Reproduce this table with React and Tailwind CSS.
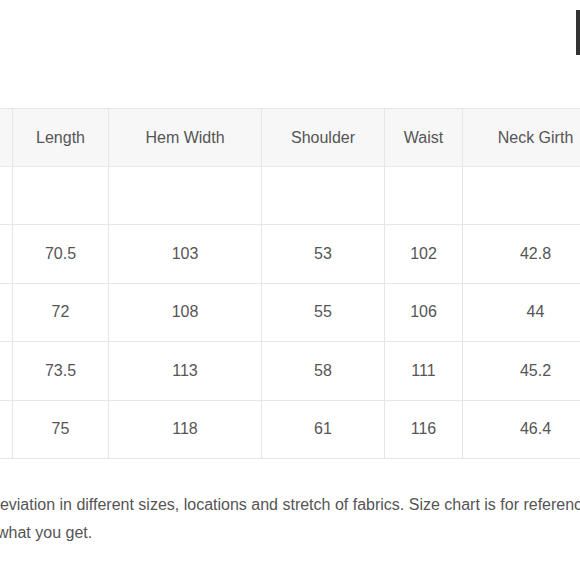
const HEADERS = ["", "Length", "Hem Width", "Shoulder", "Waist", "Neck Girth"];

const ROWS = [
  ["", "", "", "", "", ""],
  ["", "70.5", "103", "53", "102", "42.8"],
  ["", "72", "108", "55", "106", "44"],
  ["", "73.5", "113", "58", "111", "45.2"],
  ["", "75", "118", "61", "116", "46.4"],
];

const WIDTHS = ["w-[81px]", "w-[96px]", "w-[153px]", "w-[123px]", "w-[78px]", "w-[146px]"];

export default function App() {
  return (
    <div className="w-[580px] h-[580px] overflow-hidden bg-white text-[#555] font-['Liberation_Sans',Arial,sans-serif]">
      {/* top strip */}
      <div className="flex justify-end h-[108px] pt-[10px]">
        <div className="w-[4px] h-[45px] bg-[#333]" />
      </div>

      {/* size table */}
      <table className="ml-[-69px] w-[677px] table-fixed border-collapse text-[16px]">
        <colgroup>
          {WIDTHS.map((w, i) => (
            <col key={i} className={w} />
          ))}
        </colgroup>
        <thead>
          <tr className="bg-[#f7f7f7]">
            {HEADERS.map((h, i) => (
              <th key={i} className="h-[58px] border border-[#e6e6e6] font-normal text-center">
                {h}
              </th>
            ))}
          </tr>
        </thead>
        <tbody>
          {ROWS.map((r, i) => (
            <tr key={i}>
              {r.map((c, j) => (
                <td key={j} className="h-[58.4px] border border-[#e6e6e6] text-center">
                  {c}
                </td>
              ))}
            </tr>
          ))}
        </tbody>
      </table>

      {/* note */}
      <div className="mt-[32px] text-[16px] leading-[28px] whitespace-nowrap">
        <div className="ml-[-9px]">
          deviation in different sizes, locations and stretch of fabrics. Size chart is for reference only, which may differ slightly from
        </div>
        <div className="ml-[-3px]">what you get.</div>
      </div>
    </div>
  );
}
